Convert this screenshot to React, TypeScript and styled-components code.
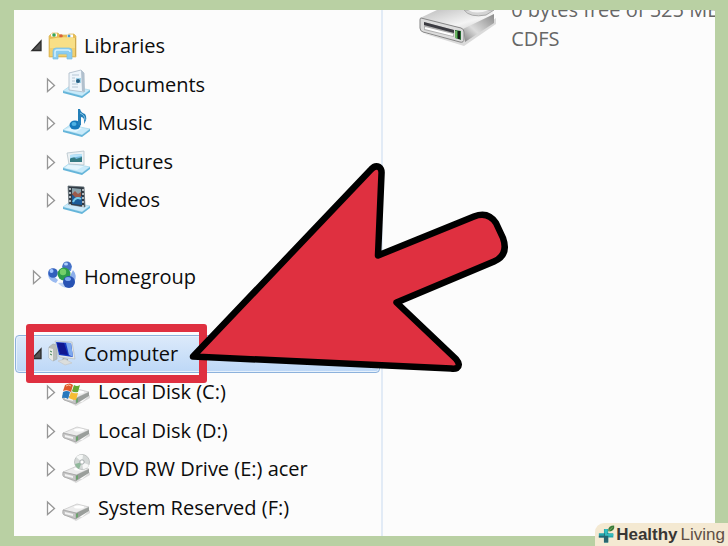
import React from "react";
import styled, { createGlobalStyle, css } from "styled-components";

const GlobalStyle = createGlobalStyle`
  * { box-sizing: border-box; }
  body {
    margin: 0;
    background: #b9d0a3;
    font-family: "Open Sans", "Noto Sans", sans-serif;
    font-size: 20px;
    line-height: 28px;
    color: #0c0c0c;
  }
`;

const Page = styled.div`
  position: relative;
  display: flex;
  min-height: 100vh;
  padding: 10px 13px 10px 14px;
`;

const Explorer = styled.main`
  flex: 1;
  display: grid;
  grid-template-columns: minmax(0, 11fr) minmax(0, 10fr);
  background: #fcfcfc;
`;

const Sidebar = styled.nav`
  position: relative;
  z-index: 1;
  display: flex;
  padding: 17px 1px 9px;
`;

const Tree = styled.ul`
  flex: 1;
  display: grid;
  grid-auto-rows: minmax(38px, 1fr);
  margin: 0;
  padding: 0;
  list-style: none;
`;

const TreeRow = styled.li<{ $level: number; $selected?: boolean }>`
  position: relative;
  display: flex;
  align-items: center;
  padding-left: ${(p) => (p.$level === 0 ? 14 : 28)}px;
  border: 1px solid transparent;
  border-radius: 4px;
  white-space: nowrap;
  ${(p) =>
    p.$selected &&
    css`
      z-index: 2;
      border-color: #8db2dc;
      background: linear-gradient(#dceafa, #bdd8f7);
      box-shadow: inset 0 0 0 1px #e6f1fc;
    `}
`;

const GroupGap = styled.li``;

const Expander = styled.button`
  display: flex;
  align-items: center;
  width: 12px;
  height: 20px;
  margin: 0 6px 0 0;
  padding: 0;
  border: 0;
  background: none;
`;

const Glyph = styled.svg`
  flex: none;
  display: block;
  overflow: visible;
`;

const ItemLink = styled.a`
  display: flex;
  align-items: center;
  gap: 7px;
  color: inherit;
  text-decoration: none;
`;

const Highlight = styled.div`
  position: absolute;
  top: -12px;
  bottom: -11px;
  left: 10px;
  width: 181px;
  border: 8px solid #df3040;
  border-radius: 3px;
  pointer-events: none;
`;

const Pointer = styled.svg`
  position: absolute;
  top: -176px;
  left: 170px;
  pointer-events: none;
`;

const Details = styled.section`
  display: flex;
  align-items: flex-start;
  gap: 13px;
  overflow: hidden;
  padding-left: 35px;
  border-left: 2px solid #e2ebf6;
`;

const DriveInfo = styled.p`
  margin: -15px 0 0;
  line-height: 29px;
  color: #666;
  white-space: nowrap;
`;

const Brand = styled.a`
  position: absolute;
  right: 0;
  bottom: 0;
  z-index: 3;
  display: flex;
  align-items: center;
  gap: 1px;
  height: 23px;
  padding: 0 3px;
  border-radius: 9px 0 0 0;
  background: #f4e9d2;
  color: #604f45;
  font: 17px "Liberation Sans", Arial, sans-serif;
  text-decoration: none;
  white-space: nowrap;
`;

const BrandStrong = styled.strong`
  margin-right: 2px;
  color: #383634;
`;

const Base = () => (
  <>
    <path d="M1 21 8 16 28 20 20 26z" fill="#c8eafa" stroke="#a3d5ea" strokeWidth=".7" />
    <path d="M1 21 20 26 28 20V22L20 28 1 23z" fill="#65b5da" />
  </>
);

const Disk = () => (
  <>
    <path d="M3 22 14 28 28 20 28 17 20 24z" fill="#777" opacity=".25" />
    <path d="M1 17 15 11 27 14 14 20z" fill="#ececec" stroke="#c3c3c3" strokeWidth=".7" />
    <path d="M1 17 14 20V26L2 22Q0 21 1 17z" fill="#c6c6c6" stroke="#9d9d9d" strokeWidth=".7" />
    <path d="M14 20 27 14V18L14 26z" fill="#9a9e9b" />
    <path d="M3 19 11 21V23L3 21z" fill="#f3f3f3" />
    <path d="M14 21V25L16 24V20z" fill="#6ba36d" />
    <ellipse cx="17" cy="14" rx="5" ry="1.5" fill="#fff" />
  </>
);

type IconName =
  | "libraries" | "documents" | "music" | "pictures" | "videos"
  | "homegroup" | "computer" | "system" | "disk" | "dvd";

const art: Record<IconName, React.ReactNode> = {
  libraries: (
    <>
      <path d="M2 3 4 1H10L12 3H19L21 2H26L28 4V25H1V4z" fill="#e7bd55" stroke="#dcb95f" strokeWidth=".7" />
      <path d="M3 3H9M19 4H25" stroke="#fff" strokeWidth="3" />
      <circle cx="6" cy="3" r="1.8" fill="#35a55a" />
      <circle cx="13" cy="4" r="1.8" fill="#d9623a" />
      <circle cx="21" cy="4" r="1.5" fill="#459bd3" />
      <path d="M2 7Q14 4 27 6V24H2z" fill="#f8df86" />
      <path d="M2 16H27V24H2z" fill="#f1d070" />
      <path d="M27.500 6V24" stroke="#d0aa50" />
      <path d="M5 27V19Q5 16 8 16H21Q24 16 24 19V27H19V22H10V27z" fill="#8bcdf0" stroke="#7bbfe3" strokeWidth=".7" />
      <path d="M7 25V20Q7 18 9 18H20Q22 18 22 20" fill="none" stroke="#d6f1fc" strokeWidth="1.500" />
    </>
  ),
  documents: (
    <>
      <Base />
      <path d="M7 3 19 0 22 3V22L7 20z" fill="#eef5fb" stroke="#abb9c6" strokeWidth=".8" />
      <path d="M19 0 22 3 23 22 20 21z" fill="#b1c0cd" />
      <path d="M10 5H17M10 8H13M10 11H13M10 14H16M10 17H16" stroke="#b5c6d4" />
      <path d="M14 8H19V13H14z" fill="#a1d3e8" />
      <circle cx="16" cy="11" r="2" fill="#285f82" />
    </>
  ),
  music: (
    <>
      <Base />
      <path d="M2 21 12 17 20 19 14 23z" fill="#e4f7ff" />
      <ellipse cx="13" cy="16" rx="5.500" ry="4.500" fill="#1679bb" />
      <ellipse cx="12" cy="15" rx="2.500" ry="2" fill="#4fb2e4" />
      <path d="M16 16V0H18Q19 4 23 5Q26 9 22 15Q23 8 19 8V16z" fill="#247fb8" />
      <path d="M18 4Q23 6 23 11" fill="none" stroke="#8bcae8" />
    </>
  ),
  pictures: (
    <>
      <Base />
      <path d="M5 6 22 4V18L7 17z" fill="#edf2f5" stroke="#b5c3ca" strokeWidth=".8" />
      <path d="M8 8 20 7V15L8 15z" fill="#78bbdf" />
      <path d="M8 15V12Q12 8 14 12L20 10V15z" fill="#357b83" />
      <path d="M8 8 20 7V9L8 11z" fill="#b9e4fa" />
      <path d="M6 18 22 19 15 23 3 21z" fill="#e4f5fc" />
    </>
  ),
  videos: (
    <>
      <Base />
      <path d="M6 0 22 1 23 21 7 19z" fill="#303943" stroke="#66727a" strokeWidth=".8" />
      <path d="M10 2 19 3V9L10 8z" fill="#8aa2ab" />
      <path d="M10 9 20 10V19L10 18z" fill="#1c5c99" />
      <path d="M10 8 13 5 16 8 19 6V11L14 12z" fill="#9b5a4b" />
      <path d="M11 16Q14 10 19 13" fill="none" stroke="#78cbea" strokeWidth="2" />
      <path d="M8 2V19M21 3V21" stroke="#d7e1e5" strokeWidth="1.500" strokeDasharray="2 2" />
      <path d="M3 21 8 19 23 22 20 25z" fill="#cdeafa" />
    </>
  ),
  homegroup: (
    <>
      <path d="M14 4Q19-1 24 4L23 9 15 8z" fill="#5b8dde" />
      <circle cx="19" cy="4" r="4.500" fill="#4570c4" />
      <path d="M1 8Q5 14 10 18L8 21Q1 19 0 13z" fill="#9abaf0" />
      <circle cx="5" cy="11" r="4.800" fill="#315fbd" />
      <circle cx="3.500" cy="9" r="2" fill="#a0c5ff" />
      <path d="M25 8Q30 14 26 20L20 18z" fill="#8caeea" />
      <path d="M10 21Q14 26 20 26L22 20z" fill="#bcd3f5" />
      <circle cx="16" cy="12" r="6.500" fill="#2b9c4b" />
      <circle cx="15" cy="10" r="3.200" fill="#73cf69" />
      <circle cx="21" cy="20" r="6" fill="#2853b4" />
      <ellipse cx="20" cy="17" rx="3" ry="2" fill="#7ca9f0" />
      <ellipse cx="18" cy="2" rx="2" ry="1.500" fill="#acd0ff" />
    </>
  ),
  computer: (
    <>
      <path d="M1 8 5 5 9 6V20L5 22 1 19z" fill="#b9bdb9" stroke="#a3aaab" strokeWidth=".7" />
      <path d="M1 9 5 10V22L1 19z" fill="#e9ebe7" />
      <path d="M2 12 4 13M2 15 4 16" stroke="#3d8252" />
      <path d="M7 2 24 3 27 20 11 18z" fill="#e4e8e9" stroke="#b5bdc1" strokeWidth=".7" />
      <path d="M8 3 23 4 25 18 11 16z" fill="#163ac3" />
      <path d="M18 4 23 4 25 18 21 16z" fill="#7da9ee" />
      <path d="M9 4 16 4 20 16 12 15z" fill="#111791" />
      <path d="M15 19 20 20V23L13 22z" fill="#a0a5a8" />
      <path d="M10 22 17 20 24 24 17 26z" fill="#dcdedc" stroke="#c5c8ca" strokeWidth=".7" />
    </>
  ),
  system: (
    <>
      <Disk />
      <path d="M3 7Q8 4 11 7L9 14Q5 11 1 13z" fill="#df5a2b" />
      <path d="M12 7Q15 9 18 7L16 14Q12 15 10 13z" fill="#65a832" />
      <path d="M1 14Q5 12 8 14L6 21Q3 19 0 20z" fill="#2878bd" />
      <path d="M9 14Q12 16 16 15L14 22Q10 22 7 20z" fill="#f6bd34" />
      <path d="M4 8Q7 6 9 8" stroke="#ffc1a0" fill="none" />
    </>
  ),
  disk: <Disk />,
  dvd: (
    <>
      <Disk />
      <circle cx="20" cy="7" r="7.500" fill="#d4d8d7" stroke="#b4b8b8" strokeWidth=".8" />
      <path d="M20 7 14 2Q18-1 21 0z" fill="#f6f8f7" />
      <path d="M20 7 27 10Q25 14 21 14z" fill="#f7f7f7" />
      <path d="M20 7 13 9Q14 13 17 14z" fill="#90b89b" />
      <circle cx="20" cy="7" r="2.200" fill="#fff" stroke="#a5abac" />
    </>
  ),
};

interface Node {
  label: string;
  icon: IconName;
  level: number;
  open?: boolean;
  selected?: boolean;
}

const groups: Node[][] = [
  [
    { label: "Libraries", icon: "libraries", level: 0, open: true },
    { label: "Documents", icon: "documents", level: 1 },
    { label: "Music", icon: "music", level: 1 },
    { label: "Pictures", icon: "pictures", level: 1 },
    { label: "Videos", icon: "videos", level: 1 },
  ],
  [{ label: "Homegroup", icon: "homegroup", level: 0 }],
  [
    { label: "Computer", icon: "computer", level: 0, open: true, selected: true },
    { label: "Local Disk (C:)", icon: "system", level: 1 },
    { label: "Local Disk (D:)", icon: "disk", level: 1 },
    { label: "DVD RW Drive (E:) acer", icon: "dvd", level: 1 },
    { label: "System Reserved (F:)", icon: "disk", level: 1 },
  ],
];

const TreeNode = ({ node }: { node: Node }) => (
  <TreeRow $level={node.level} $selected={node.selected}>
    <Expander aria-label={`Toggle ${node.label}`} aria-expanded={!!node.open}>
      <Glyph width="12" height="14" viewBox="0 0 12 14" aria-hidden="true">
        {node.open ? (
          <path d="M11 2V11.500H2z" fill="#555" stroke="#2c2c2c" strokeWidth="1.300" />
        ) : (
          <path d="M3.500 1V13.500L10.500 7.500z" fill="#fff" stroke="#979797" strokeWidth="1.300" />
        )}
      </Glyph>
    </Expander>
    <ItemLink href="#" aria-current={node.selected ? "true" : undefined}>
      <Glyph width="29" height="29" viewBox="0 0 29 29" aria-hidden="true">
        {art[node.icon]}
      </Glyph>
      {node.label}
    </ItemLink>
    {node.selected && (
      <>
        <Highlight />
        <Pointer width="328" height="218" viewBox="186 160 328 218" aria-hidden="true">
          <path
            d="M193 356.500 371 169.500Q375 165 379 167Q382 169 381.500 174L378 255.500 474 216.500Q488 211 496 223L503 238Q509 255 494 261.500L396.500 302.500 456 359Q461 365 457 368Q455 369 451 368.500z"
            fill="#df3040"
            stroke="#000"
            strokeWidth="6.500"
            strokeLinejoin="round"
          />
        </Pointer>
      </>
    )}
  </TreeRow>
);

const DriveArt = () => (
  <Glyph width="80" height="38" viewBox="0 0 80 38" aria-hidden="true">
    <defs>
      <linearGradient id="driveTop" x1="0" y1="0" x2="1" y2="1">
        <stop offset="0" stopColor="#bdbdbd" />
        <stop offset=".6" stopColor="#f4f4f4" />
        <stop offset="1" stopColor="#c5c5c5" />
      </linearGradient>
      <linearGradient id="driveSide" x1="0" y1="1" x2="1" y2="0">
        <stop offset="0" stopColor="#808080" />
        <stop offset=".4" stopColor="#dcdcdc" />
        <stop offset="1" stopColor="#8a8a8a" />
      </linearGradient>
    </defs>
    <path d="M4 23 46 36 78 14V8L45 32z" fill="#666" opacity=".22" />
    <path d="M2 8 19 0H74L76 6 47 21z" fill="url(#driveTop)" />
    <path d="M45 19 76 4V13L47 32z" fill="url(#driveSide)" />
    <path d="M3 8 43 18Q46 19 46 22V29Q46 33 42 32L5 22Q2 21 2 18V10Q2 8 3 8z" fill="#dcdcdc" stroke="#858585" />
    <path d="M6 12 36 20V27L6 20z" fill="#b0b0b0" />
    <path d="M6 12 36 20V23L6 15z" fill="#3c3c42" />
    <path d="M7 18 35 25" stroke="#fff" strokeWidth="2" />
    <path d="M37 20 43 21V30L37 28z" fill="#266b32" />
    <path d="M41 21V29" stroke="#161c16" strokeWidth="2" />
    <path d="M38 21V28" stroke="#80c96e" strokeWidth="1.500" />
    <path d="M46 0Q52 8 68 5L76 0z" fill="#d4d4d4" stroke="#a8a8a8" />
    <path d="M50 0Q58 5 71 0z" fill="#f4f4f4" />
  </Glyph>
);

export default function App() {
  return (
    <>
      <GlobalStyle />
      <Page>
        <Explorer>
          <Sidebar aria-label="Folders">
            <Tree>
              {groups.map((group, i) => (
                <React.Fragment key={i}>
                  {i > 0 && <GroupGap aria-hidden="true" />}
                  {group.map((node) => (
                    <TreeNode key={node.label} node={node} />
                  ))}
                </React.Fragment>
              ))}
            </Tree>
          </Sidebar>
          <Details>
            <DriveArt />
            <DriveInfo>
              0 bytes free of 525 MB
              <br />
              CDFS
            </DriveInfo>
          </Details>
        </Explorer>
        <Brand href="#">
          <Glyph width="17" height="19" viewBox="0 0 20 21" aria-hidden="true">
            <path d="M7 4H12V9H18V14H12V20H7V14H1V9H7z" fill="#25a6ad" />
            <path d="M7 9H12V20H7V14H1V12H7z" fill="#28656f" />
            <path d="M8 4H11V10H18V12H8z" fill="#35bec0" />
            <path d="M12 6Q12 0 19 0Q20 6 14 7z" fill="#397b39" />
            <path d="M12 7 17 2" stroke="#89b66d" />
          </Glyph>
          <BrandStrong>Healthy</BrandStrong>
          <span>Living</span>
        </Brand>
      </Page>
    </>
  );
}
